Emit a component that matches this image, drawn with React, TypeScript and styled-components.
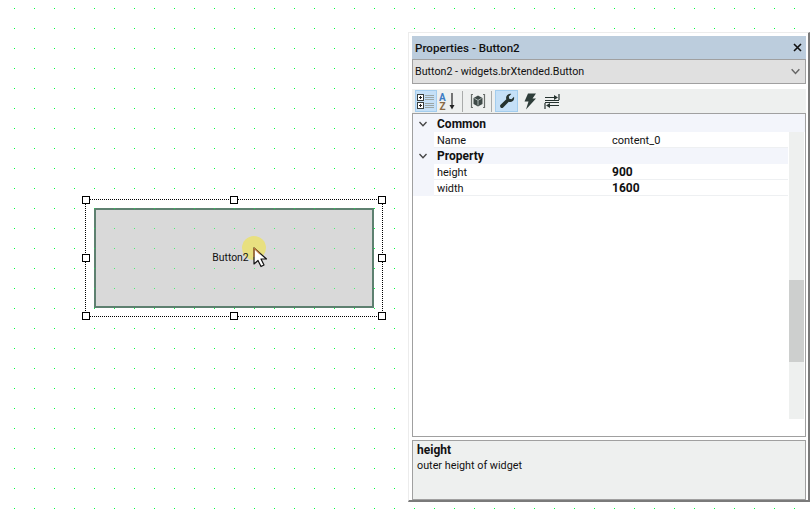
import React from "react"
import styled, { createGlobalStyle } from "styled-components"

const Global = createGlobalStyle`
  html, body { margin: 0; padding: 0; background: #fff; }
  * { box-sizing: border-box; }
`

const dots = `conic-gradient(at 1px 1px, transparent 75%, #00ff40 0)`

const Canvas = styled.div`
  position: relative;
  width: 812px;
  height: 527px;
  overflow: hidden;
  background-color: #fff;
  background-image: ${dots};
  background-size: 20px 20px;
  background-position: 14px 8px;
  font-family: Roboto, "Noto Sans", sans-serif;
  color: #111;
`

const Selection = styled.div`
  position: absolute;
  left: 85px;
  top: 199px;
  width: 298px;
  height: 118px;
  border: 1px dotted #000;
`

const Handle = styled.span<{ $x: number; $y: number }>`
  position: absolute;
  left: calc(${p => p.$x}% - 4px);
  top: calc(${p => p.$y}% - 4px);
  width: 8px;
  height: 8px;
  background: #fff;
  border: 1px solid #000;
`

const Widget = styled.div`
  position: absolute;
  left: 94px;
  top: 208px;
  width: 280px;
  height: 100px;
  display: flex;
  align-items: center;
  justify-content: center;
  background: #d9d9d9;
  border: 2px solid #5e8070;
  font-size: 10.4px;
  padding-bottom: 1px;
  padding-right: 7px;

  /* click highlight, sits under the label */
  &::before {
    content: "";
    position: absolute;
    left: 146px;
    top: 26px;
    width: 24px;
    height: 24px;
    border-radius: 50%;
    background: #e8e080;
  }

  &::after {
    content: "";
    position: absolute;
    inset: -2px;
    background-image: ${dots};
    background-size: 20px 20px;
    opacity: 0.65;
  }
`

const WidgetLabel = styled.span`
  position: relative;
`

const Pointer = styled.svg`
  position: absolute;
  left: 252px;
  top: 246px;
`

const Panel = styled.div`
  position: absolute;
  left: 408px;
  top: 32px;
  width: 402px;
  height: 470px;
  display: flex;
  flex-direction: column;
  background: #fff;
  border-top: 1px solid #ececec;
  border-left: 1px solid #ececec;
  border-right: 2px solid #7a7a7a;
  border-bottom: 2px solid #7a7a7a;
  padding: 3px 2px 0 3px;
`

const TitleBar = styled.div`
  height: 23px;
  flex: none;
  display: flex;
  align-items: center;
  justify-content: space-between;
  padding: 0 4px 0 3px;
  background: #bccddd;
  font-size: 11.6px;
  font-weight: 500;
`

const CloseIcon = styled.svg`
  display: block;
`

const Combo = styled.div`
  height: 25px;
  flex: none;
  display: flex;
  align-items: center;
  justify-content: space-between;
  padding: 0 4px 0 2px;
  background: #e0e0e0;
  border: 1px solid #a0a0a0;
  font-size: 10.7px;
`

const Toolbar = styled.div`
  height: 24px;
  flex: none;
  margin-top: 5px;
  display: flex;
  align-items: center;
  padding-left: 3px;
  background: #eef0ef;
`

const ToolButton = styled.div<{ $active?: boolean; $w: number }>`
  width: ${p => p.$w}px;
  height: 22px;
  display: flex;
  align-items: center;
  justify-content: center;
  background: ${p => (p.$active ? "#c5e0f7" : "transparent")};
  border: 1px solid ${p => (p.$active ? "#a3cdee" : "transparent")};
`

const ToolSep = styled.span<{ $l: number; $r: number }>`
  width: 1px;
  height: 21px;
  margin: 0 ${p => p.$r}px 0 ${p => p.$l}px;
  background: #a9abaa;
`

const Grid = styled.div`
  flex: 1;
  min-height: 0;
  display: flex;
  flex-direction: column;
  border: 1px solid #a0a0a0;
  background: #fff;
  font-size: 10.9px;
`

const GroupRow = styled.div<{ $full?: boolean }>`
  height: ${p => (p.$full ? 18 : 16)}px;
  padding-top: ${p => (p.$full ? 2 : 0)}px;
  flex: none;
  display: flex;
  align-items: center;
  background: #f3f5fb;
  font-weight: 700;
  font-size: 12px;
`

const GroupToggle = styled.span`
  width: 24px;
  flex: none;
  display: flex;
  padding-left: 5px;
`

const GridBody = styled.div`
  display: flex;
  gap: 1px;
  flex: 1;
`

const Rows = styled.div`
  width: 375px;
`

const PropRow = styled.div`
  height: 16px;
  display: grid;
  grid-template-columns: 21px 174px 1fr;
  align-items: center;
  border-bottom: 1px solid #eef0f2;
  line-height: 14px;
`

const Gutter = styled.span`
  height: 16px;
  background: #f3f5fb;
`

const PropName = styled.span`
  padding: 1px 0 0 3px;
`

const PropValue = styled.span<{ $bold?: boolean }>`
  padding: ${p => (p.$bold ? 0 : 1)}px 0 0 4px;
  font-weight: ${p => (p.$bold ? 700 : 400)};
  font-size: ${p => (p.$bold ? 12 : 11)}px;
`

const ScrollTrack = styled.div`
  width: 15px;
  height: 287px;
  padding-top: 148px;
  background: #eef0ef;
`

const ScrollThumb = styled.div`
  height: 82px;
  background: #cdcfce;
`

const Description = styled.div`
  height: 60px;
  flex: none;
  margin-top: 3px;
  padding: 2px 4px;
  background: #eef0ef;
  border: 1px solid #a0a0a0;
  font-size: 10.8px;
  line-height: 15px;
`

const DescTitle = styled.div`
  font-weight: 700;
  font-size: 12px;
`

const Chevron = ({ color, size }: { color: string; size: number }) => (
  <svg width={size} height={size} viewBox="0 0 10 10" fill="none" stroke={color} strokeWidth="1.3">
    <path d="M1.500 3 L5 6.800 L8.500 3" />
  </svg>
)

const CategorizedIcon = () => (
  <svg width="18" height="17" viewBox="0 0 18 17">
    <rect x="0.500" y="1.500" width="6" height="6" fill="#fff" stroke="#3a3f3c" />
    <path d="M2 4.500h3M3.500 3v3" stroke="#222" />
    <rect x="0.500" y="9.500" width="6" height="6" fill="#fff" stroke="#3a3f3c" />
    <path d="M2 12.500h3M3.500 11v3" stroke="#222" />
    <path d="M8 2.500h9M8 4.500h9M8 6.500h9M8 10.500h9M8 12.500h9M8 14.500h9" stroke="#9aa5a5" />
  </svg>
)

const SortIcon = () => (
  <svg width="18" height="19" viewBox="0 0 18 19">
    <text x="0" y="9" fontSize="10" fontWeight="700" fontFamily="Roboto, sans-serif" fill="#3b7cc4">A</text>
    <text x="0.500" y="18" fontSize="10" fontWeight="700" fontFamily="Roboto, sans-serif" fill="#8a6a45">Z</text>
    <path d="M13 1v14" stroke="#222" strokeWidth="1.200" />
    <path d="M10.500 13h5L13 17.500z" fill="#222" />
  </svg>
)

const CubeIcon = () => (
  <svg width="16" height="16" viewBox="0 0 16 16">
    <path d="M3 1.500H1.500v13H3M13 1.500h1.500v13H13" fill="none" stroke="#6a6f6c" strokeWidth="1.200" />
    <path d="M8 2.500l4.500 2.500v6L8 13.500 3.500 11V5z" fill="#3f4a47" />
    <path d="M4.500 5.400L8 7.400l3.500-2M8 7.400v5" fill="none" stroke="#b9c4c2" strokeWidth="0.900" />
  </svg>
)

const WrenchIcon = () => (
  <svg width="16" height="16" viewBox="0 0 16 16">
    <path
      d="M15 3.800c.4 1.600-.1 3.100-1.200 4.100-1.100 1-2.600 1.300-4 .8L4.200 14.400c-.7.7-1.900.7-2.600 0-.7-.7-.7-1.900 0-2.600L7.300 6.200c-.5-1.400-.2-2.900.8-4C9.200 1.100 10.700.6 12.300 1L9.800 3.500l.4 2.300 2.300.4z"
      fill="#26332f"
    />
  </svg>
)

const BoltIcon = () => (
  <svg width="14" height="17" viewBox="0 0 14 17">
    <path d="M5 .5h8L9.500 5.500H13L3 16.500l2.500-8H1.500z" fill="#2f3e3a" />
  </svg>
)

const SwapIcon = () => (
  <svg width="16" height="15" viewBox="0 0 16 15">
    <path d="M1 3.500h12M1 6.500h14M1 8.500h14M3 11.500h12" stroke="#26332f" fill="none" />
    <path d="M10 1l4 2.500L10 6zM6 9l-4 2.500L6 14z" fill="#26332f" />
    <path d="M15 0v6M1 9v6" stroke="#26332f" strokeWidth="1.200" />
  </svg>
)

const PointerGlyph = () => (
  <Pointer width="18" height="24" viewBox="0 0 18 24">
    <path d="M2 2v16l4-3.500 3 6 3-1.500-3-6h5.500z" fill="#fff" stroke="#111" strokeWidth="1.200" strokeLinejoin="round" />
    <path d="M2 2v9M2 2l6 6" stroke="#c07a3a" strokeWidth="1.200" />
  </Pointer>
)

const handles = [
  [0, 0], [50, 0], [100, 0],
  [0, 50], [100, 50],
  [0, 100], [50, 100], [100, 100],
]

export default function App() {
  return (
    <Canvas>
      <Global />
      <Widget>
        <WidgetLabel>Button2</WidgetLabel>
      </Widget>
      <Selection>
        {handles.map(([x, y]) => (
          <Handle key={`${x}-${y}`} $x={x} $y={y} />
        ))}
      </Selection>
      <PointerGlyph />

      <Panel>
        <TitleBar>
          Properties - Button2
          <CloseIcon width="9" height="9" viewBox="0 0 9 9">
            <path d="M1 1l7 7M8 1L1 8" stroke="#111" strokeWidth="1.600" />
          </CloseIcon>
        </TitleBar>
        <Combo>
          Button2 - widgets.brXtended.Button
          <Chevron color="#666" size={11} />
        </Combo>
        <Toolbar>
          <ToolButton $active $w={22}><CategorizedIcon /></ToolButton>
          <ToolButton $w={22}><SortIcon /></ToolButton>
          <ToolSep $l={3} $r={3} />
          <ToolButton $w={24}><CubeIcon /></ToolButton>
          <ToolSep $l={1} $r={3} />
          <ToolButton $active $w={23}><WrenchIcon /></ToolButton>
          <ToolButton $w={24}><BoltIcon /></ToolButton>
          <ToolButton $w={20}><SwapIcon /></ToolButton>
        </Toolbar>
        <Grid>
          <GroupRow $full>
            <GroupToggle><Chevron color="#444" size={10} /></GroupToggle>
            Common
          </GroupRow>
          <GridBody>
            <Rows>
              <PropRow>
                <Gutter />
                <PropName>Name</PropName>
                <PropValue>content_0</PropValue>
              </PropRow>
              <GroupRow>
                <GroupToggle><Chevron color="#444" size={10} /></GroupToggle>
                Property
              </GroupRow>
              <PropRow>
                <Gutter />
                <PropName>height</PropName>
                <PropValue $bold>900</PropValue>
              </PropRow>
              <PropRow>
                <Gutter />
                <PropName>width</PropName>
                <PropValue $bold>1600</PropValue>
              </PropRow>
            </Rows>
            <ScrollTrack>
              <ScrollThumb />
            </ScrollTrack>
          </GridBody>
        </Grid>
        <Description>
          <DescTitle>height</DescTitle>
          outer height of widget
        </Description>
      </Panel>
    </Canvas>
  )
}
